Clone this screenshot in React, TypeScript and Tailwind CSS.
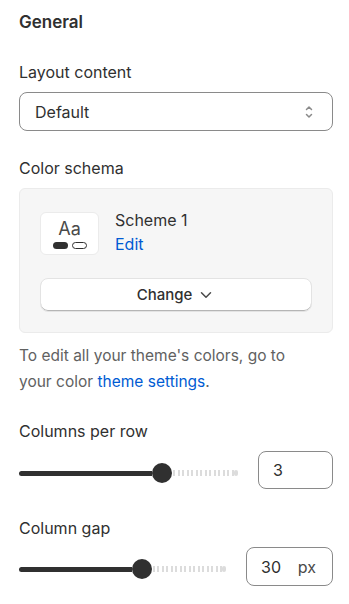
import { ChevronDown } from 'lucide-react';

const SelectArrows = () => (
    <svg width="10" height="16" viewBox="0 0 10 16" fill="none" stroke="#8a8a8a" strokeWidth="1.5" strokeLinecap="round" strokeLinejoin="round">
        <path d="M2.5 5.5 5 3l2.5 2.5" />
        <path d="M2.5 10.5 5 13l2.5-2.5" />
    </svg>
);

const Slider = ({ filled, rest }: { filled: number; rest: number }) => (
    <div className="flex h-5 items-center">
        <div className="h-[5px] rounded-l-full bg-[#303030]" style={{ width: filled }} />
        <div className="h-5 w-5 shrink-0 rounded-full bg-[#303030]" />
        <div
            className="ml-[1px] h-[6px] bg-[repeating-linear-gradient(90deg,#dcdcdc_0px,#dcdcdc_2px,transparent_2px,transparent_4.5px)]"
            style={{ width: rest }}
        />
        <div className="h-[6px] w-[4px] rounded-[2px] bg-[#dcdcdc]" />
    </div>
);

export default function App() {
    return (
        <div className="w-full bg-white pl-[19px] pr-[16px] pt-[10px] font-['Inter',sans-serif] text-[#303030]">
            <h2 className="text-[17px] font-semibold leading-6">General</h2>

            <div className="mt-[28px] text-[16px] leading-5">Layout content</div>
            <div className="mt-[10px] flex h-[39px] items-center justify-between rounded-[8px] border border-[#8a8a8a] pl-[15px] pr-[18px] text-[16px]">
                <span>Default</span>
                <SelectArrows />
            </div>

            <div className="mt-[27px] text-[16px] leading-5">Color schema</div>
            <div className="mt-[10px] rounded-[6px] border border-[#ebebeb] bg-[#f6f6f6] px-5 pb-5 pt-[23px]">
                <div className="flex items-start gap-4">
                    <div className="flex h-[43px] w-[59px] shrink-0 flex-col items-center justify-center rounded-[6px] border border-[#ebebeb] bg-white">
                        <span className="text-[18px] leading-[20px] text-[#4a4a4a]">Aa</span>
                        <div className="mt-[3px] flex gap-[4px]">
                            <div className="h-[7px] w-[15px] rounded-full bg-[#303030]" />
                            <div className="h-[7px] w-[15px] rounded-full border border-[#303030]" />
                        </div>
                    </div>
                    <div className="-mt-[4px] flex flex-col text-[16px] leading-[24px]">
                        <span>Scheme 1</span>
                        <span className="text-[#005bd3]">Edit</span>
                    </div>
                </div>
                <button className="mt-[22px] flex h-[34px] w-full items-center justify-center gap-[5px] rounded-[8px] border border-[#e3e3e3] bg-white text-[15px] font-medium shadow-[inset_0_-1px_0_#b5b5b5]">
                    Change
                    <ChevronDown size={18} strokeWidth={2} className="text-[#4a4a4a]" />
                </button>
            </div>

            <p className="mt-[10px] text-[15.5px] leading-[26px] text-[#616161]">
                To edit all your theme's colors, go to<br />
                your color <span className="text-[#005bd3]">theme settings</span>.
            </p>

            <div className="mt-[26px] text-[16px] leading-5">Columns per row</div>
            <div className="mt-[10px] flex items-center justify-between">
                <div className="pt-[6px]">
                    <Slider filled={133} rest={61} />
                </div>
                <div className="flex h-[38px] w-[75px] items-center rounded-[8px] border border-[#8a8a8a] pl-[14px] text-[16px]">
                    3
                </div>
            </div>

            <div className="mt-[29px] text-[16px] leading-5">Column gap</div>
            <div className="mt-[9px] flex items-center justify-between">
                <div className="pt-[5px]">
                    <Slider filled={113} rest={69} />
                </div>
                <div className="flex h-[39px] w-[87px] items-center justify-between rounded-[8px] border border-[#8a8a8a] pl-[14px] pr-[16px] text-[16px]">
                    <span>30</span>
                    <span className="text-[#4a4a4a]">px</span>
                </div>
            </div>
        </div>
    );
}
